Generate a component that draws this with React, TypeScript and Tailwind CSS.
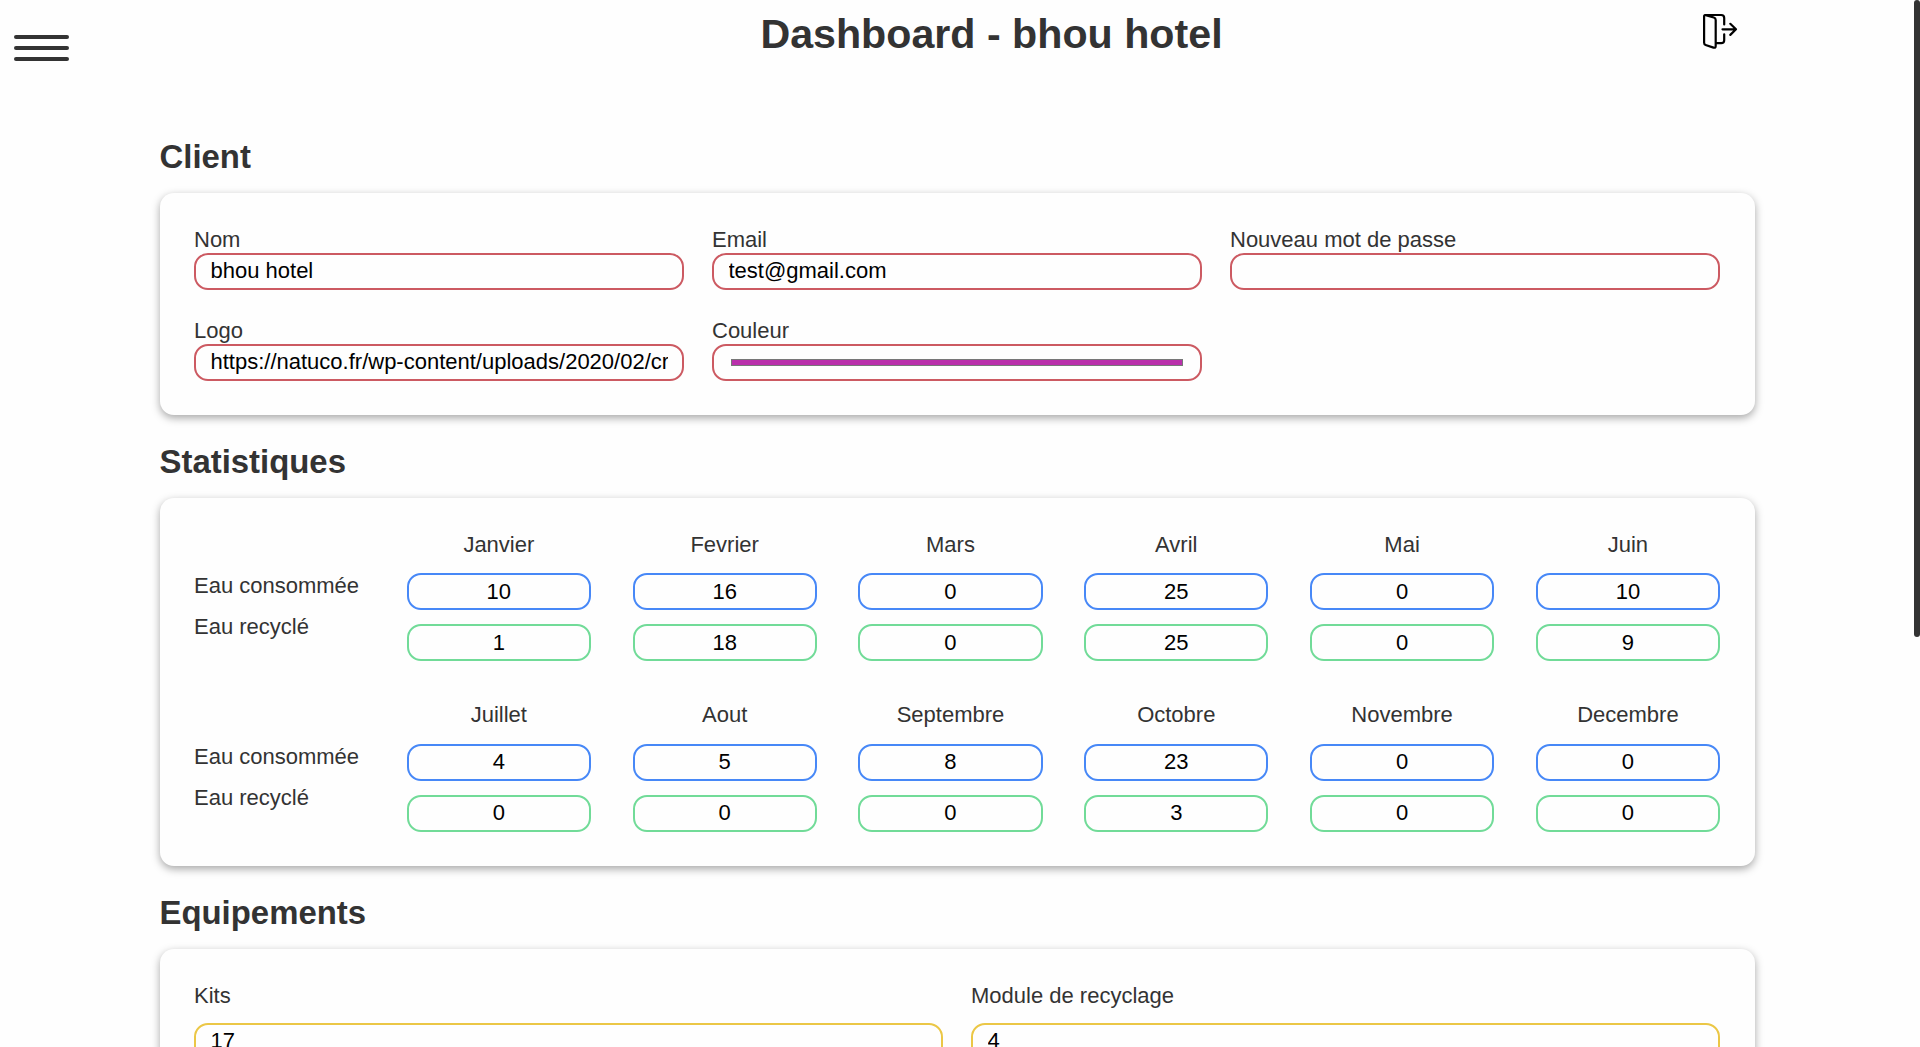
import React from "react";

const fieldBase =
  "block h-[37px] w-full min-w-0 rounded-[14px] border-2 bg-transparent text-[22px] text-black outline-none";

function Field({ label, value, type = "text" }: { label: string; value: string; type?: string }) {
  return (
    <label className="block min-w-0">
      <span className="block h-[26px] leading-[25px]">{label}</span>
      <input type={type} defaultValue={value} className={fieldBase + " border-[#cc5a62] pr-[14px] pb-[2px] pl-[14.5px]"} />
    </label>
  );
}

function Section({ title, children }: { title: string; children: React.ReactNode }) {
  return (
    <section className="pt-7">
      <h2 className="mb-[17px] text-[32.9px] leading-[38px] font-bold">{title}</h2>
      <div className="rounded-[14px] bg-[#fefefe] px-[34.5px] py-[34px] shadow-[0_3px_8px_rgba(0,0,0,0.35)]">
        {children}
      </div>
    </section>
  );
}

type Month = [name: string, used: number, recycled: number];

const firstHalf: Month[] = [
  ["Janvier", 10, 1],
  ["Fevrier", 16, 18],
  ["Mars", 0, 0],
  ["Avril", 25, 25],
  ["Mai", 0, 0],
  ["Juin", 10, 9],
];

const secondHalf: Month[] = [
  ["Juillet", 4, 0],
  ["Aout", 5, 0],
  ["Septembre", 8, 0],
  ["Octobre", 23, 3],
  ["Novembre", 0, 0],
  ["Decembre", 0, 0],
];

function HalfYear({ months, monthClass, inputClass }: { months: Month[]; monthClass: string; inputClass: string }) {
  return (
    <div className="flex gap-[41.6px]">
      <div className="flex w-[171.15px] shrink-0 flex-col gap-[15px] pt-[41px] leading-[25px] whitespace-nowrap">
        <div className="h-[26px]">Eau consommée</div>
        <div className="h-[26px]">Eau recyclé</div>
      </div>
      {months.map(([name, used, recycled]) => (
        <div key={name} className="min-w-0 flex-1">
          <div className={"h-[41px] text-center " + monthClass}>{name}</div>
          <input defaultValue={used} className={fieldBase + " border-[#4788f7] px-[14px] text-center " + inputClass} />
          <input defaultValue={recycled} className={fieldBase + " mt-[14px] border-[#71db98] px-[14px] text-center " + inputClass} />
        </div>
      ))}
    </div>
  );
}

function Equipment({ label, value }: { label: string; value: string }) {
  return (
    <label className="block min-w-0">
      <span className="block h-10 leading-[25px]">{label}</span>
      <input defaultValue={value} className={fieldBase + " border-[#ebc746] pr-[14px] pb-[2px] pl-[14.5px]"} />
    </label>
  );
}

export default function App() {
  return (
    <div className="flex h-[1047px] overflow-hidden bg-[#fefefe] font-['Liberation_Sans',Arial,sans-serif] text-[22px] text-[#333]">
      <div className="min-w-0 flex-1">
        <header className="flex h-[110px] items-start">
          <button aria-label="Menu" className="mt-[35px] ml-[14px] flex w-[55px] flex-col gap-[7px]">
            <span className="h-1 w-full rounded-[2px] bg-[#333]" />
            <span className="h-1 w-full rounded-[2px] bg-[#333]" />
            <span className="h-1 w-full rounded-[2px] bg-[#333]" />
          </button>
          <h1 className="mt-[11px] ml-[141px] flex-1 text-center text-[41.2px] leading-[47px] font-bold">Dashboard - bhou hotel</h1>
          <button aria-label="Déconnexion" className="mt-[13px] mr-[175px] ml-[-71px]">
            <svg width="37" height="37" viewBox="0 0 37 37" fill="none" stroke="#000" strokeWidth="2.2" strokeLinecap="round" strokeLinejoin="round">
              <path d="M3.5 2H19.200q3 0 3 3V11.500M22.200 21.300V27.200q0 3-3 3H14.500" />
              <path d="M3.700 2.100L11.800 4.500Q13.700 5.100 13.700 7V33Q13.700 35.300 11.500 34.600L3.600 32Q2.100 31.500 2.100 29.800V3.500Q2.100 1.700 3.700 2.100Z" />
              <path d="M20.500 16.300H33.500M28.300 10.800L34 16.300L28.300 21.900" />
            </svg>
          </button>
        </header>

        <main className="mx-[159.5px]">
          <Section title="Client">
            <div className="grid grid-cols-3 gap-7">
              <Field label="Nom" value="bhou hotel" />
              <Field label="Email" value="test@gmail.com" />
              <Field label="Nouveau mot de passe" value="" type="password" />
              <Field label="Logo" value="https://natuco.fr/wp-content/uploads/2020/02/cropped-logo.png" />
              <div>
                <div className="h-[26px] leading-[25px]">Couleur</div>
                <div className="h-[37px] rounded-[14px] border-2 border-[#cc5a62] px-[17px] pt-[13px]">
                  <div className="h-[7px] border border-[#777] bg-[#b92fab]" />
                </div>
              </div>
            </div>
          </Section>

          <Section title="Statistiques">
            <div className="flex flex-col gap-[42px]">
              <HalfYear months={firstHalf} monthClass="leading-[25px]" inputClass="pb-0" />
              <HalfYear months={secondHalf} monthClass="leading-[23px]" inputClass="pb-[2px]" />
            </div>
          </Section>

          <Section title="Equipements">
            <div className="grid grid-cols-2 gap-7">
              <Equipment label="Kits" value="17" />
              <Equipment label="Module de recyclage" value="4" />
            </div>
          </Section>
        </main>
      </div>
      <div className="w-[6px] shrink-0">
        <div className="h-[637px] rounded-[3px] bg-[#333]" />
      </div>
    </div>
  );
}
